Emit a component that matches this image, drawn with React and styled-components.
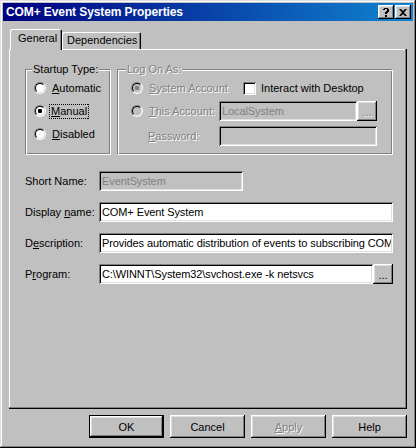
import React from 'react';
import styled, { createGlobalStyle, css } from 'styled-components';

const GlobalStyle = createGlobalStyle`
  html, body { margin: 0; padding: 0; background: #c0c0c0; }
  body {
    font-family: "Liberation Sans", Arial, sans-serif;
    font-size: 11px;
    color: #000;
  }
  * { box-sizing: border-box; }
`;

const raised = css`
  box-shadow: inset -1px -1px #000, inset 1px 1px #fff, inset -2px -2px #808080, inset 2px 2px #dfdfdf;
`;
const sunken = css`
  box-shadow: inset 1px 1px #808080, inset -1px -1px #fff, inset 2px 2px #000, inset -2px -2px #dfdfdf;
`;
const embossed = css`
  color: #808080;
  text-shadow: 1px 1px 0 #fff;
`;

const Window = styled.div`
  width: 416px;
  height: 448px;
  padding: 3px;
  background: #c0c0c0;
  box-shadow: inset -1px -1px #000, inset 1px 1px #dfdfdf, inset -2px -2px #808080, inset 2px 2px #fff;
  display: flex;
  flex-direction: column;
`;

const TitleBar = styled.div`
  height: 18px;
  display: flex;
  align-items: center;
  padding: 0 2px 0 3px;
  background: linear-gradient(to right, #000080, #1084d0);
`;
const TitleText = styled.div`
  flex: 1;
  color: #fff;
  font-weight: bold;
  font-size: 12px;
  letter-spacing: -0.1px;
  white-space: nowrap;
`;
const CaptionButtons = styled.div`
  display: flex;
  gap: 1px;
`;
const CaptionButton = styled.div`
  width: 16px;
  height: 14px;
  background: #c0c0c0;
  display: flex;
  align-items: center;
  justify-content: center;
  ${raised}
`;

const Body = styled.div`
  flex: 1;
  display: flex;
  flex-direction: column;
  padding: 0 6px 7px;
`;

const TabStrip = styled.div`
  display: flex;
  align-items: flex-end;
  height: 20px;
  margin-top: 8px;
  padding-left: 1px;
`;
const Tab = styled.div`
  position: relative;
  z-index: ${(p) => (p.$active ? 1 : 0)};
  width: ${(p) => p.$w}px;
  height: ${(p) => (p.$active ? 21 : 17)}px;
  margin-bottom: ${(p) => (p.$active ? -1 : 0)}px;
  padding-left: ${(p) => p.$pl}px;
  padding-bottom: ${(p) => (p.$active ? 3 : 1)}px;
  display: flex;
  align-items: center;
  background: #c0c0c0;
  border-radius: 2px 2px 0 0;
  box-shadow: inset 1px 1px #fff, inset -1px 0 #000, inset -2px 0 #808080;
  white-space: nowrap;
`;

const Panel = styled.div`
  flex: 1;
  padding: 20px 14px 0 16px;
  box-shadow: inset -1px -1px #000, inset -2px -2px #808080, inset 1px 1px #fff;
`;

const GroupRow = styled.div`
  display: flex;
  gap: 6px;
  height: 86px;
`;
const Group = styled.div`
  position: relative;
  width: ${(p) => p.$w}px;
  padding: 8px 0 0 ${(p) => p.$pl}px;
  border-top: 1px solid #808080;
  border-left: 1px solid #808080;
  border-right: 1px solid #fff;
  border-bottom: 1px solid #fff;
  box-shadow: inset 1px 1px #fff, inset -1px -1px #808080;
  display: flex;
  flex-direction: column;
`;
const Legend = styled.span`
  position: absolute;
  top: -8px;
  left: ${(p) => p.$left}px;
  padding: 0 1px;
  background: #c0c0c0;
  line-height: 14px;
  ${(p) => p.$disabled && embossed}
`;

const OptionRow = styled.div`
  height: 20px;
  margin-top: ${(p) => p.$mt || 0}px;
  display: flex;
  align-items: center;
`;
const Cell = styled.div`
  width: ${(p) => p.$w}px;
  padding-left: ${(p) => p.$pl || 0}px;
  flex-shrink: 0;
  display: flex;
  align-items: center;
  ${(p) => p.$disabled && embossed}
`;

const RadioWrap = styled.label`
  display: inline-flex;
  align-items: center;
  gap: 4px;
  ${(p) => p.$disabled && embossed}
`;
const RadioOuter = styled.span`
  width: 12px;
  height: 12px;
  border-radius: 50%;
  border: 1px solid;
  border-color: #808080 #fff #fff #808080;
  display: flex;
  flex-shrink: 0;
`;
const RadioInner = styled.span`
  flex: 1;
  border-radius: 50%;
  border: 1px solid;
  border-color: #000 #dfdfdf #dfdfdf #000;
  background: ${(p) => (p.$disabled ? '#c0c0c0' : '#fff')};
  display: flex;
  align-items: center;
  justify-content: center;
`;
const RadioDot = styled.span`
  width: 4px;
  height: 4px;
  border-radius: 1px;
  background: ${(p) => (p.$disabled ? '#808080' : '#000')};
`;
const focusLine = 'repeating-linear-gradient(90deg, #000 0 1px, transparent 1px 2px)';
const focusCol = 'repeating-linear-gradient(0deg, #000 0 1px, transparent 1px 2px)';
const OptionText = styled.span`
  padding: 0 1px;
  line-height: 13px;
  border: 1px solid transparent;
  ${(p) =>
    p.$focus &&
    css`
      background:
        ${focusLine} left top / 100% 1px no-repeat,
        ${focusLine} left bottom / 100% 1px no-repeat,
        ${focusCol} left top / 1px 100% no-repeat,
        ${focusCol} right top / 1px 100% no-repeat;
      padding: 1px 2px 1px 2px;
      margin: -1px -1px;
      border: none;
    `}
`;

const CheckWrap = styled.label`
  display: inline-flex;
  align-items: center;
  gap: 5px;
`;
const CheckBox = styled.span`
  width: 13px;
  height: 13px;
  background: #fff;
  ${sunken}
`;

const Fields = styled.div`
  display: flex;
  flex-direction: column;
  gap: 11px;
  margin-top: 16px;
`;
const FieldRow = styled.div`
  display: flex;
  align-items: center;
  height: 20px;
`;
const FieldLabel = styled.span`
  width: 74px;
  flex-shrink: 0;
`;
const TextBox = styled.input`
  width: ${(p) => p.$w}px;
  height: 20px;
  border: none;
  outline: none;
  margin: 0;
  padding: 0 2px 0 3px;
  font: inherit;
  font-size: 11px;
  letter-spacing: -0.1px;
  color: #000;
  background: #fff;
  ${sunken}
  &:disabled {
    background: #c0c0c0;
    color: #808080;
  }
`;
const BrowseButton = styled.button`
  width: 20px;
  height: 20px;
  border: none;
  margin: 0;
  padding: 0 0 3px;
  font: inherit;
  font-size: 11px;
  color: #000;
  background: #c0c0c0;
  display: flex;
  align-items: flex-end;
  justify-content: center;
  ${raised}
  &:disabled {
    ${embossed}
  }
`;

const ButtonRow = styled.div`
  display: flex;
  justify-content: flex-end;
  gap: 6px;
  margin-top: 6px;
`;
const DialogButton = styled.button`
  width: 75px;
  height: 23px;
  border: none;
  margin: 0;
  padding: 0;
  font: inherit;
  font-size: 11px;
  color: #000;
  background: #c0c0c0;
  ${raised}
  ${(p) =>
    p.$default &&
    css`
      box-shadow: inset 0 0 0 1px #000, inset -2px -2px #000, inset 2px 2px #fff, inset -3px -3px #808080, inset 3px 3px #dfdfdf;
    `}
  &:disabled {
    ${embossed}
  }
`;

const Radio = ({ checked, disabled, focus, children }) => (
  <RadioWrap $disabled={disabled}>
    <RadioOuter>
      <RadioInner $disabled={disabled}>{checked && <RadioDot $disabled={disabled} />}</RadioInner>
    </RadioOuter>
    <OptionText $focus={focus}>{children}</OptionText>
  </RadioWrap>
);

const HelpGlyph = () => (
  <svg width="8" height="9" viewBox="0 0 8 9">
    <path d="M1 1h1V0h4v1h1v3H6v1H5v1H3V4h1V3h1V1H3v1H1z" fill="#000" />
    <rect x="3" y="7" width="2" height="2" fill="#000" />
  </svg>
);
const CloseGlyph = () => (
  <svg width="8" height="7" viewBox="0 0 8 7">
    <path d="M0 0h2l2 2 2-2h2L5 3.5 8 7H6L4 5 2 7H0l3-3.5z" fill="#000" />
  </svg>
);

export default function App() {
  return (
    <>
      <GlobalStyle />
      <Window>
        <TitleBar>
          <TitleText>COM+ Event System Properties</TitleText>
          <CaptionButtons>
            <CaptionButton>
              <HelpGlyph />
            </CaptionButton>
            <CaptionButton>
              <CloseGlyph />
            </CaptionButton>
          </CaptionButtons>
        </TitleBar>

        <Body>
          <TabStrip>
            <Tab $active $w={52} $pl={8}>General</Tab>
            <Tab $w={79} $pl={5}>Dependencies</Tab>
          </TabStrip>

          <Panel>
            <GroupRow>
              <Group $w={86} $pl={8}>
                <Legend $left={6}>Startup Type:</Legend>
                <OptionRow>
                  <Radio><u>A</u>utomatic</Radio>
                </OptionRow>
                <OptionRow $mt={3}>
                  <Radio checked focus><u>M</u>anual</Radio>
                </OptionRow>
                <OptionRow $mt={3}>
                  <Radio><u>D</u>isabled</Radio>
                </OptionRow>
              </Group>

              <Group $w={276} $pl={13}>
                <Legend $left={8} $disabled>Log On As:</Legend>
                <OptionRow>
                  <Cell $w={112}>
                    <Radio checked disabled><u>S</u>ystem Account</Radio>
                  </Cell>
                  <CheckWrap>
                    <CheckBox />
                    Interact with Desktop
                  </CheckWrap>
                </OptionRow>
                <OptionRow $mt={3}>
                  <Cell $w={88}>
                    <Radio disabled><u>T</u>his Account:</Radio>
                  </Cell>
                  <TextBox $w={138} disabled value="LocalSystem" readOnly />
                  <BrowseButton disabled>...</BrowseButton>
                </OptionRow>
                <OptionRow $mt={5}>
                  <Cell $w={88} $pl={17} $disabled>
                    <span><u>P</u>assword:</span>
                  </Cell>
                  <TextBox $w={158} disabled value="" readOnly />
                </OptionRow>
              </Group>
            </GroupRow>

            <Fields>
              <FieldRow>
                <FieldLabel>Short Name:</FieldLabel>
                <TextBox $w={144} disabled value="EventSystem" readOnly />
              </FieldRow>
              <FieldRow>
                <FieldLabel>Display <u>n</u>ame:</FieldLabel>
                <TextBox $w={294} value="COM+ Event System" readOnly />
              </FieldRow>
              <FieldRow>
                <FieldLabel>D<u>e</u>scription:</FieldLabel>
                <TextBox
                  $w={294}
                  value="Provides automatic distribution of events to subscribing COM components."
                  readOnly
                />
              </FieldRow>
              <FieldRow>
                <FieldLabel>P<u>r</u>ogram:</FieldLabel>
                <TextBox $w={274} value="C:\WINNT\System32\svchost.exe -k netsvcs" readOnly />
                <BrowseButton>...</BrowseButton>
              </FieldRow>
            </Fields>
          </Panel>

          <ButtonRow>
            <DialogButton $default>OK</DialogButton>
            <DialogButton>Cancel</DialogButton>
            <DialogButton disabled><u>A</u>pply</DialogButton>
            <DialogButton>Help</DialogButton>
          </ButtonRow>
        </Body>
      </Window>
    </>
  );
}
